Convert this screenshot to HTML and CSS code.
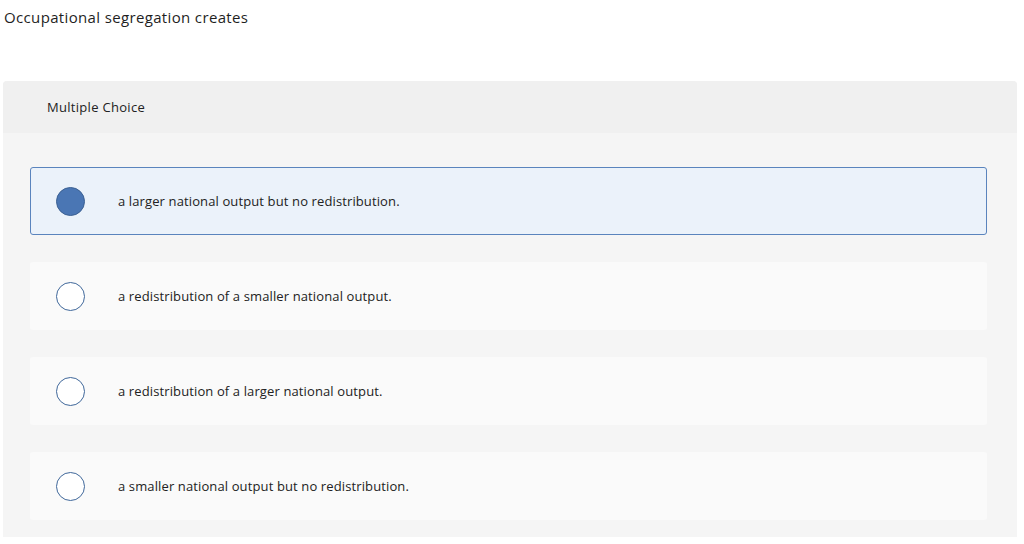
FILE: index.html
```html
<!DOCTYPE html>
<html>
<head>
<meta charset="utf-8">
<link rel="stylesheet" href="styles.css">
</head>
<body>
<div class="question">Occupational segregation creates</div>
<div class="panel">
  <div class="panel-head">Multiple Choice</div>
  <div class="panel-body">
    <div class="option selected"><span class="radio"></span><span class="label">a larger national output but no redistribution.</span></div>
    <div class="option"><span class="radio"></span><span class="label">a redistribution of a smaller national output.</span></div>
    <div class="option"><span class="radio"></span><span class="label">a redistribution of a larger national output.</span></div>
    <div class="option"><span class="radio"></span><span class="label">a smaller national output but no redistribution.</span></div>
  </div>
</div>
</body>
</html>
```
FILE: styles.css
```css
html, body { margin: 0; padding: 0; background: #ffffff; }
body { font-family: "Open Sans", "Liberation Sans", sans-serif; color: #222; }
.question {
  font-size: 15px;
  letter-spacing: 0.35px;
  line-height: 20px;
  padding: 7px 0 0 4px;
  height: 81px;
  box-sizing: border-box;
  color: #1f1f1f;
}
.panel {
  margin-left: 3px;
  width: 1014px;
  background: #f5f5f5;
  border-radius: 4px 4px 0 0;
}
.panel-head {
  background: #f0f0f0;
  height: 52px;
  box-sizing: border-box;
  padding: 17px 0 0 44px;
  font-size: 13px;
  letter-spacing: 0.3px;
  line-height: 18px;
  border-radius: 4px 4px 0 0;
}
.panel-body {
  padding: 34px 30px 17px 27px;
  display: flex;
  flex-direction: column;
  gap: 27px;
}
.option {
  height: 68px;
  box-sizing: border-box;
  background: #fafafa;
  border-radius: 3px;
  display: flex;
  align-items: center;
  padding-left: 25px;
  border: 1px solid transparent;
}
.option.selected {
  background: #ebf2fa;
  border: 1px solid #5a84bd;
}
.radio {
  width: 27px;
  height: 27px;
  border-radius: 50%;
  border: 1.3px solid #3f679a;
  background: #ffffff;
  flex: none;
}
.selected .radio { background: #4a76b4; border-color: #3c6193; }
.label {
  margin-left: 33px;
  font-size: 13px;
  letter-spacing: 0.12px;
  line-height: 18px;
  color: #222;
}
```
